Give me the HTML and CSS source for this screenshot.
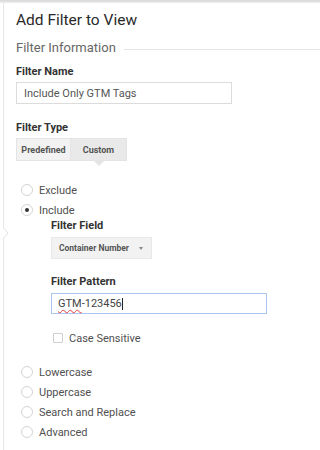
FILE: index.html
```html
<!DOCTYPE html>
<html>
<head>
<meta charset="utf-8">
<link rel="stylesheet" href="styles.css">
</head>
<body>
<div class="topbar"></div>
<div class="panel">
  <svg class="pointer" width="6" height="12" viewBox="0 0 6 12"><path d="M0 0 L5 6 L0 12" fill="#fff" stroke="#e2e2e2" stroke-width="1"/></svg>
  <h1 class="title">Add Filter to View</h1>
  <div class="section">
    <span class="section-text">Filter Information</span>
    <span class="section-line"></span>
  </div>
  <div class="label">Filter Name</div>
  <div class="textbox name-box">Include Only GTM Tags</div>

  <div class="label type-label">Filter Type</div>
  <div class="segments">
    <div class="seg">Predefined</div>
    <div class="seg active">Custom</div>
  </div>

  <div class="radios first">
    <div class="radio-row"><span class="radio"></span><span class="radio-text">Exclude</span></div>
    <div class="radio-row"><span class="radio checked"></span><span class="radio-text">Include</span></div>
  </div>

  <div class="nested">
    <div class="label">Filter Field</div>
    <div class="select"><span>Container Number</span><span class="caret"></span></div>
    <div class="label pattern-label">Filter Pattern</div>
    <div class="textbox pattern-box"><span class="misspelled">GTM</span>-123456<span class="cursor"></span></div>
    <div class="check-row"><span class="checkbox"></span><span class="check-text">Case Sensitive</span></div>
  </div>

  <div class="radios second">
    <div class="radio-row"><span class="radio"></span><span class="radio-text">Lowercase</span></div>
    <div class="radio-row"><span class="radio"></span><span class="radio-text">Uppercase</span></div>
    <div class="radio-row"><span class="radio"></span><span class="radio-text">Search and Replace</span></div>
    <div class="radio-row"><span class="radio"></span><span class="radio-text">Advanced</span></div>
  </div>
</div>
</body>
</html>
```

FILE: styles.css
```css
html, body {
  margin: 0;
  padding: 0;
  background: #fff;
  font-family: Roboto, "Liberation Sans", Arial, sans-serif;
  color: #444;
}
.topbar {
  height: 3px;
  background: linear-gradient(#d6d6d6, #efefef);
}
.panel {
  position: relative;
  margin-left: 3px;
  border-left: 1px solid #e6e6e6;
  padding: 7px 0 20px 12px;
  min-height: 420px;
}
.pointer {
  position: absolute;
  left: -1px;
  top: 224px;
}
.title {
  margin: 0;
  font-size: 15.5px;
  line-height: 20px;
  font-weight: 400;
  color: #2a2a2a;
}
.section {
  display: flex;
  align-items: center;
  margin-top: 10px;
  height: 16px;
}
.section-text {
  font-size: 13px;
  line-height: 16px;
  color: #666;
}
.section-line {
  flex: 1;
  height: 1px;
  background: #e6e6e6;
  margin-left: 8px;
  margin-top: 2px;
}
.label {
  font-size: 11px;
  line-height: 14px;
  font-weight: 700;
  color: #333;
  margin-top: 9px;
}
.textbox {
  box-sizing: border-box;
  border: 1px solid #dcdcdc;
  font-size: 11px;
  color: #555;
  display: flex;
  align-items: center;
}
.name-box {
  width: 216px;
  height: 22px;
  margin-top: 3px;
  padding-left: 7px;
}
.type-label {
  margin-top: 17px;
}
.segments {
  display: flex;
  width: 111px;
  height: 23px;
  margin-top: 3px;
}
.seg {
  position: relative;
  box-sizing: border-box;
  flex: 0 0 55px;
  display: flex;
  align-items: center;
  justify-content: center;
  font-size: 9px;
  font-weight: 700;
  color: #555;
  background: #f2f2f2;
  border: 1px solid #e4e4e4;
}
.seg.active {
  flex: 0 0 56px;
  background: #e9e9e9;
  border-left: none;
}
.seg.active::after {
  content: "";
  position: absolute;
  left: 23px;
  bottom: -6px;
  border-left: 5px solid transparent;
  border-right: 5px solid transparent;
  border-top: 5px solid #e4e4e4;
}
.radios.first {
  margin-top: 19px;
}
.radios.second {
  margin-top: 18px;
}
.radio-row {
  display: flex;
  align-items: center;
  height: 20px;
  padding-left: 5px;
}
.radio {
  box-sizing: border-box;
  width: 12px;
  height: 12px;
  border: 1px solid #d4d4d4;
  border-radius: 50%;
  background: #fff;
  position: relative;
}
.radio.checked::after {
  content: "";
  position: absolute;
  left: 3px;
  top: 3px;
  width: 4px;
  height: 4px;
  border-radius: 50%;
  background: #333;
}
.radio-text {
  margin-left: 6px;
  font-size: 11px;
  color: #505050;
}
.nested {
  padding-left: 35px;
}
.nested > .label:first-child {
  margin-top: -1px;
}
.select {
  box-sizing: border-box;
  width: 101px;
  height: 22px;
  margin-top: 4px;
  background: #f2f2f2;
  border: 1px solid #e8e8e8;
  display: flex;
  align-items: center;
  justify-content: space-between;
  padding: 0 8px 0 7px;
  font-size: 8.5px;
  font-weight: 700;
  color: #555;
}
.caret {
  width: 0;
  height: 0;
  border-left: 2.5px solid transparent;
  border-right: 2.5px solid transparent;
  border-top: 3px solid #888;
}
.pattern-label {
  margin-top: 16px;
}
.pattern-box {
  width: 216px;
  height: 21px;
  margin-top: 4px;
  padding-left: 6px;
  border-color: #a9c5f0;
  color: #444;
}
.misspelled {
  text-decoration: underline wavy #e04040;
  text-decoration-thickness: 1px;
  text-underline-offset: 2px;
}
.cursor {
  display: inline-block;
  width: 1px;
  height: 12px;
  background: #222;
}
.check-row {
  display: flex;
  align-items: center;
  margin-top: 18px;
  padding-left: 2px;
  height: 12px;
}
.checkbox {
  box-sizing: border-box;
  width: 10px;
  height: 10px;
  border: 1px solid #cfcfcf;
  border-radius: 1px;
}
.check-text {
  margin-left: 6px;
  font-size: 11px;
  color: #505050;
}
```
